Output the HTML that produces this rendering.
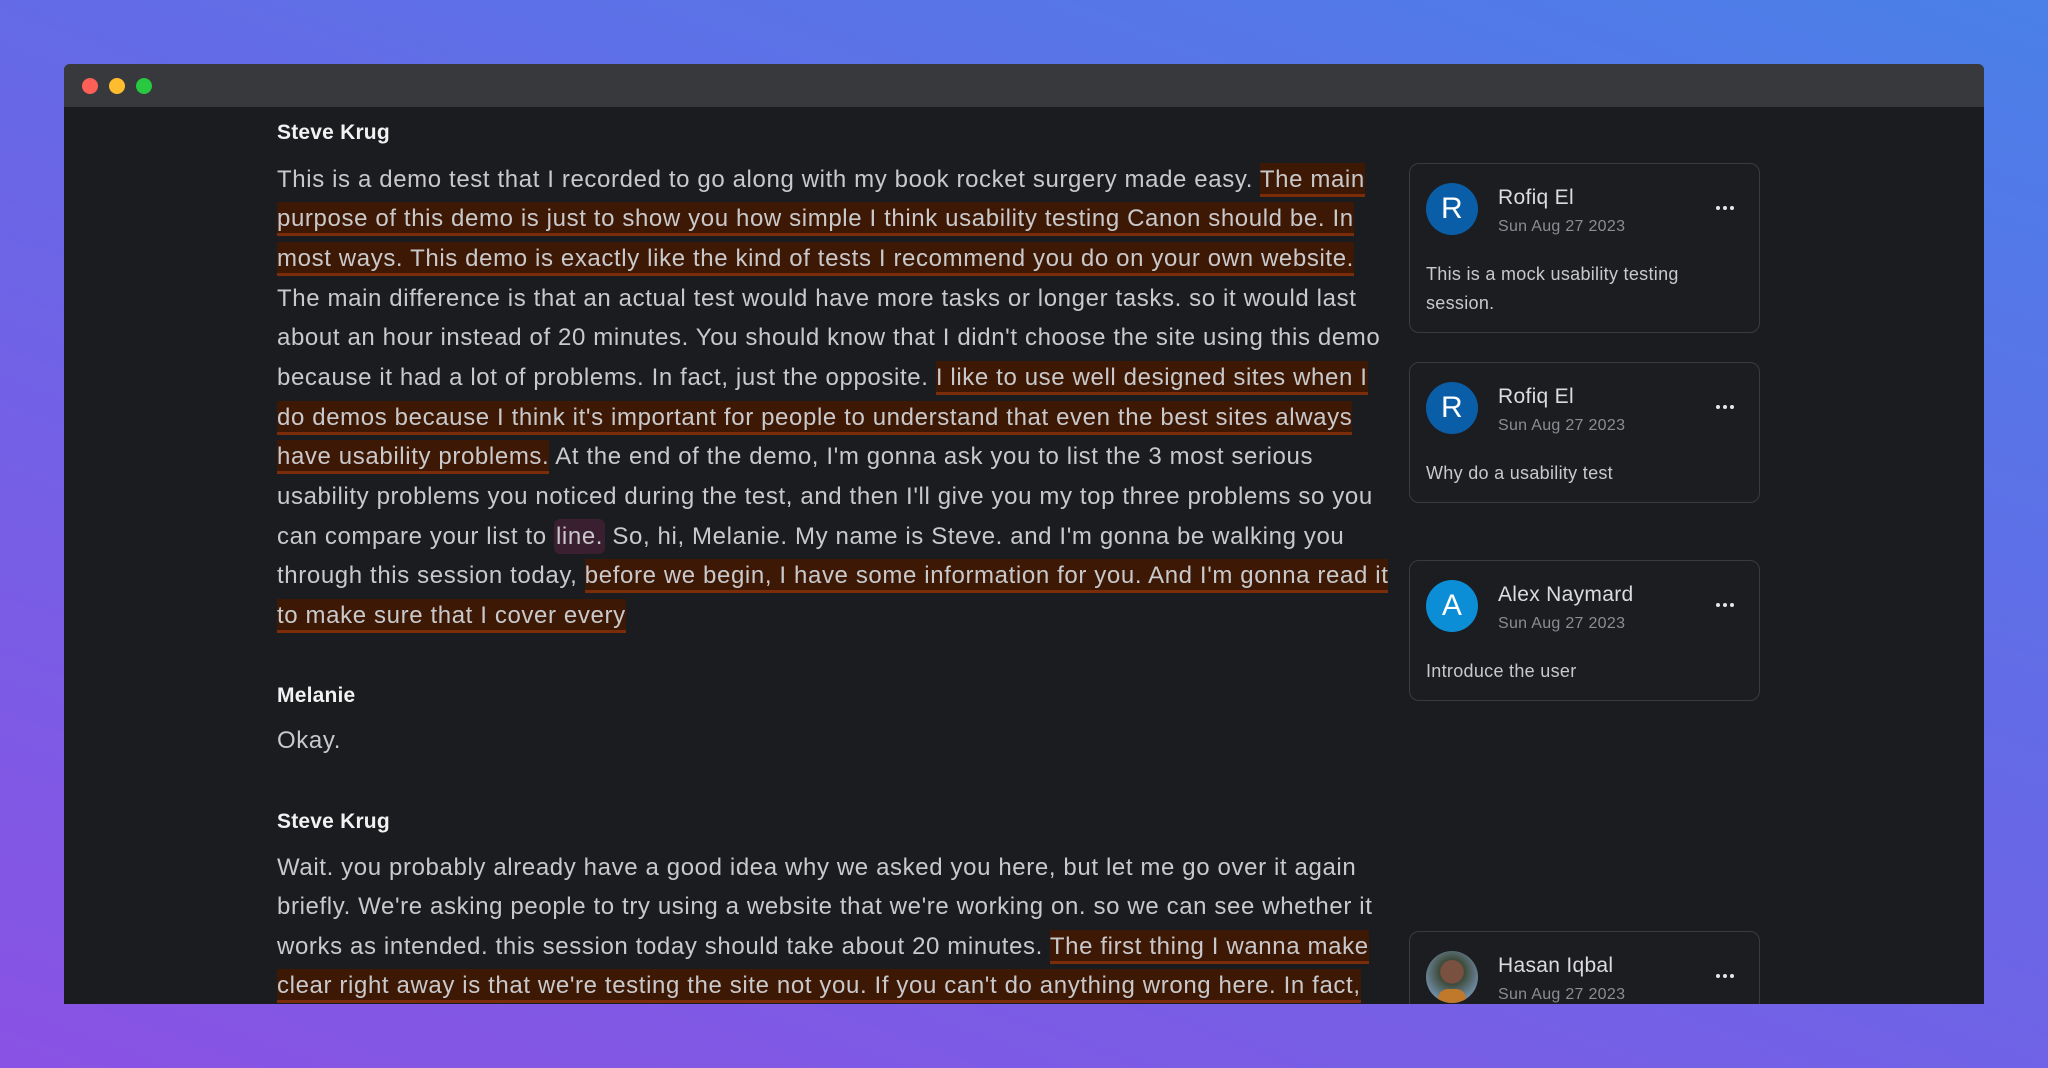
<!DOCTYPE html>
<html><head><meta charset="utf-8"><style>
*{margin:0;padding:0;box-sizing:border-box}
html,body{width:2048px;height:1068px;overflow:hidden}
body{background:linear-gradient(20deg,#8a52e4 0%,#6a66e6 50%,#4a80e8 100%);font-family:"Liberation Sans",sans-serif;position:relative}
.win{position:absolute;left:64px;top:64px;width:1920px;height:940px;background:#1b1c1f;border-radius:6px 6px 0 0;overflow:hidden}
.bar{position:absolute;left:0;top:0;width:100%;height:43px;background:#38393c}
.dot{position:absolute;top:14px;width:16px;height:16px;border-radius:50%}
.l{position:absolute;left:213px;white-space:nowrap;font-size:24px;line-height:40px;height:40px;color:#c9c9cc;letter-spacing:0.62px}
.h{position:absolute;left:213px;font-size:21px;font-weight:bold;color:#f2f2f2;line-height:28px;letter-spacing:0.2px}
.hl{background:#3d1905;border-bottom:3px solid #7a2d08;padding:3px 0 1px}
.pl{background:#3a1f30;border-radius:6px;padding:4px 2px}
.card{position:absolute;left:1345px;width:351px;border:1.5px solid #3a3b3f;border-radius:10px;background:#1c1d20;letter-spacing:0.3px}
.av{position:absolute;left:16px;top:19px;width:52px;height:52px;border-radius:50%;color:#fff;font-size:30px;text-align:center;line-height:52px}
.nm{position:absolute;left:88px;top:22px;font-size:21px;color:#dcdcdf}
.dt{position:absolute;left:88px;top:54px;font-size:16px;color:#8c8d92}
.dots{position:absolute;left:306px;top:42px;width:18px;height:4px}
.dots i{position:absolute;top:0;width:4px;height:4px;border-radius:50%;background:#e6e6e6}
.cm{position:absolute;left:16px;top:96px;font-size:18px;line-height:29px;color:#c9c9cc;width:310px}
</style></head><body>
<div class="win">
<div class="bar">
<div class="dot" style="left:18px;background:#fe5f57"></div>
<div class="dot" style="left:45px;background:#febc2e"></div>
<div class="dot" style="left:72px;background:#28c840"></div>
</div>
<div class="h" style="top:55px">Steve Krug</div>
<div class="l" style="top:96px">This is a demo test that I recorded to go along with my book rocket surgery made easy. <span class="hl">The main</span></div>
<div class="l" style="top:135px"><span class="hl">purpose of this demo is just to show you how simple I think usability testing Canon should be. In</span></div>
<div class="l" style="top:175px"><span class="hl">most ways. This demo is exactly like the kind of tests I recommend you do on your own website.</span></div>
<div class="l" style="top:215px">The main difference is that an actual test would have more tasks or longer tasks. so it would last</div>
<div class="l" style="top:254px">about an hour instead of 20 minutes. You should know that I didn't choose the site using this demo</div>
<div class="l" style="top:294px">because it had a lot of problems. In fact, just the opposite. <span class="hl">I like to use well designed sites when I</span></div>
<div class="l" style="top:334px"><span class="hl">do demos because I think it's important for people to understand that even the best sites always</span></div>
<div class="l" style="top:373px"><span class="hl">have usability problems.</span> At the end of the demo, I'm gonna ask you to list the 3 most serious</div>
<div class="l" style="top:413px">usability problems you noticed during the test, and then I'll give you my top three problems so you</div>
<div class="l" style="top:453px">can compare your list to <span class="pl">line.</span> So, hi, Melanie. My name is Steve. and I'm gonna be walking you</div>
<div class="l" style="top:492px">through this session today, <span class="hl">before we begin, I have some information for you. And I'm gonna read it</span></div>
<div class="l" style="top:532px"><span class="hl">to make sure that I cover every</span></div>
<div class="h" style="top:618px">Melanie</div>
<div class="l" style="top:657px">Okay.</div>
<div class="h" style="top:744px">Steve Krug</div>
<div class="l" style="top:784px">Wait. you probably already have a good idea why we asked you here, but let me go over it again</div>
<div class="l" style="top:823px">briefly. We're asking people to try using a website that we're working on. so we can see whether it</div>
<div class="l" style="top:863px">works as intended. this session today should take about 20 minutes. <span class="hl">The first thing I wanna make</span></div>
<div class="l" style="top:902px"><span class="hl">clear right away is that we're testing the site not you. If you can't do anything wrong here. In fact,</span></div>

<div class="card" style="top:99px;height:170px">
<div class="av" style="background:#0a5ea8">R</div><div class="nm">Rofiq El</div><div class="dt">Sun Aug 27 2023</div>
<div class="dots"><i style="left:0"></i><i style="left:7px"></i><i style="left:14px"></i></div>
<div class="cm">This is a mock usability testing session.</div></div>
<div class="card" style="top:298px;height:141px">
<div class="av" style="background:#0a5ea8">R</div><div class="nm">Rofiq El</div><div class="dt">Sun Aug 27 2023</div>
<div class="dots"><i style="left:0"></i><i style="left:7px"></i><i style="left:14px"></i></div>
<div class="cm">Why do a usability test</div></div>
<div class="card" style="top:496px;height:141px">
<div class="av" style="background:#0b8ed6">A</div><div class="nm">Alex Naymard</div><div class="dt">Sun Aug 27 2023</div>
<div class="dots"><i style="left:0"></i><i style="left:7px"></i><i style="left:14px"></i></div>
<div class="cm">Introduce the user</div></div>
<div class="card" style="top:867px;height:141px">
<div class="av" style="background:radial-gradient(circle at 50% 40%,#7a5040 0 28%,#3d4a3a 30%,#6f8aa0 70%);overflow:hidden"><span style="position:absolute;left:12px;top:38px;width:28px;height:20px;background:#c0782a;border-radius:10px 10px 0 0"></span></div>
<div class="nm">Hasan Iqbal</div><div class="dt">Sun Aug 27 2023</div>
<div class="dots"><i style="left:0"></i><i style="left:7px"></i><i style="left:14px"></i></div></div>
</div>
</body></html>
